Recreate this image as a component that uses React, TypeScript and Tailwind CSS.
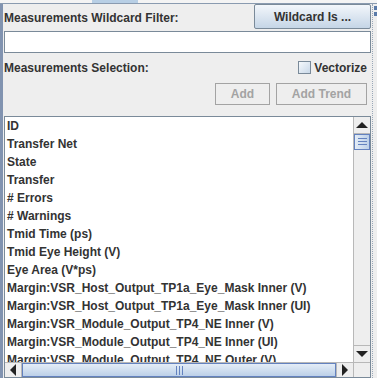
import React from "react";

const items = [
  "ID",
  "Transfer Net",
  "State",
  "Transfer",
  "# Errors",
  "# Warnings",
  "Tmid Time (ps)",
  "Tmid Eye Height (V)",
  "Eye Area (V*ps)",
  "Margin:VSR_Host_Output_TP1a_Eye_Mask Inner (V)",
  "Margin:VSR_Host_Output_TP1a_Eye_Mask Inner (UI)",
  "Margin:VSR_Module_Output_TP4_NE Inner (V)",
  "Margin:VSR_Module_Output_TP4_NE Inner (UI)",
  "Margin:VSR_Module_Output_TP4_NE Outer (V)",
];

function Arrow({ dir }: { dir: "up" | "down" | "left" | "right" }) {
  const pts = {
    up: "0,6 6,0 12,6",
    down: "0,0 12,0 6,6",
    left: "6,0 6,12 0,6",
    right: "0,0 0,12 6,6",
  }[dir];
  const vert = dir === "up" || dir === "down";
  return (
    <svg width={vert ? 12 : 6} height={vert ? 6 : 12} viewBox={vert ? "0 0 12 6" : "0 0 6 12"}>
      <polygon points={pts} fill="#222" />
    </svg>
  );
}

export default function App() {
  return (
    <div className="w-[377px] h-[378px] overflow-hidden bg-[#eeeeee] relative font-['Liberation_Sans',Arial,sans-serif] text-[12px] font-bold text-[#333333]">
      {/* tab strip */}
      <div className="h-[4px] flex bg-[#f4f4f4] border-b border-[#8a9bb0]">
        <div className="w-[92px]" />
        <div className="w-[46px] bg-[#b8cfe5]" />
      </div>

      <div className="flex h-[374px]">
        {/* main panel */}
        <div className="w-[372px] border-l-[3px] border-[#8193b0] pl-[1px] pr-[1px] flex flex-col">
          {/* filter row */}
          <div className="flex items-center justify-between h-[26px]">
            <span className="leading-none pt-[2px]">Measurements Wildcard Filter:</span>
            <button className="w-[117px] h-[25px] rounded-[2px] border border-[#7a8a99] bg-gradient-to-b from-[#f3f7fb] to-[#c5d5e6] text-[#333333] font-bold text-[12px]">
              Wildcard Is ...
            </button>
          </div>
          <div className="h-[22px] mt-[1px] bg-white border border-[#7a8a99]" />

          {/* selection row */}
          <div className="flex items-center justify-between h-[20px] mt-[5px]">
            <span>Measurements Selection:</span>
            <label className="flex items-center gap-[3px] pr-[4px]">
              <span className="w-[13px] h-[13px] border border-[#7a8a99] bg-gradient-to-br from-[#f6f9fc] to-[#c9d8e8]" />
              <span>Vectorize</span>
            </label>
          </div>

          {/* button row */}
          <div className="flex justify-end gap-[6px] mt-[5px] pr-[4px]">
            <button className="w-[55px] h-[22px] border border-[#a3a3a3] bg-[#eeeeee] text-[#a3a3a3] font-bold text-[12px]">
              Add
            </button>
            <button className="w-[91px] h-[22px] border border-[#a3a3a3] bg-[#eeeeee] text-[#a3a3a3] font-bold text-[12px]">
              Add Trend
            </button>
          </div>

          {/* list */}
          <div className="mt-[11px] h-[263px] border border-[#7a8a99] flex flex-col bg-white overflow-hidden">
            <div className="flex flex-1 min-h-0">
              <div className="flex-1 overflow-hidden pl-[2px]">
                {items.map((it) => (
                  <div key={it} className="h-[18px] leading-[18px] whitespace-nowrap">
                    {it}
                  </div>
                ))}
              </div>
              {/* vertical scrollbar */}
              <div className="w-[17px] bg-[#eeeeee] border-l border-[#b8b8b8] flex flex-col">
                <div className="h-[17px] flex items-center justify-center border-b border-[#b8b8b8]">
                  <Arrow dir="up" />
                </div>
                <div className="h-[16px] border border-[#6382bf] bg-gradient-to-r from-[#e4edf7] to-[#bcd0e8] flex flex-col items-center justify-center gap-[2px]">
                  <div className="w-[9px] h-[1px] bg-[#6382bf]" />
                  <div className="w-[9px] h-[1px] bg-[#6382bf]" />
                  <div className="w-[9px] h-[1px] bg-[#6382bf]" />
                </div>
                <div className="flex-1" />
                <div className="h-[17px] flex items-center justify-center border-t border-[#b8b8b8]">
                  <Arrow dir="down" />
                </div>
              </div>
            </div>
            {/* horizontal scrollbar */}
            <div className="h-[15px] shrink-0 flex bg-[#eeeeee] border-t border-[#b8b8b8]">
              <div className="w-[17px] flex items-center justify-center border-r border-[#b8b8b8]">
                <Arrow dir="left" />
              </div>
              <div className="flex-1 border border-[#6382bf] bg-gradient-to-b from-[#e4edf7] to-[#bcd0e8] flex items-center justify-center gap-[2px]">
                <div className="w-[1px] h-[9px] bg-[#6382bf]" />
                <div className="w-[1px] h-[9px] bg-[#6382bf]" />
                <div className="w-[1px] h-[9px] bg-[#6382bf]" />
              </div>
              <div className="w-[17px] flex items-center justify-center border-l border-[#b8b8b8]">
                <Arrow dir="right" />
              </div>
              <div className="w-[17px] border-l border-[#b8b8b8]" />
            </div>
          </div>
        </div>

        {/* splitter */}
        <div className="w-[5px] border-l border-dotted border-[#9aa8b8] flex flex-col items-center pt-[2px] gap-[2px]">
          <div className="w-[3px] h-[4px] bg-[#5a7aa8]" />
          <div className="w-[3px] h-[4px] bg-[#5a7aa8]" />
        </div>
      </div>
    </div>
  );
}
